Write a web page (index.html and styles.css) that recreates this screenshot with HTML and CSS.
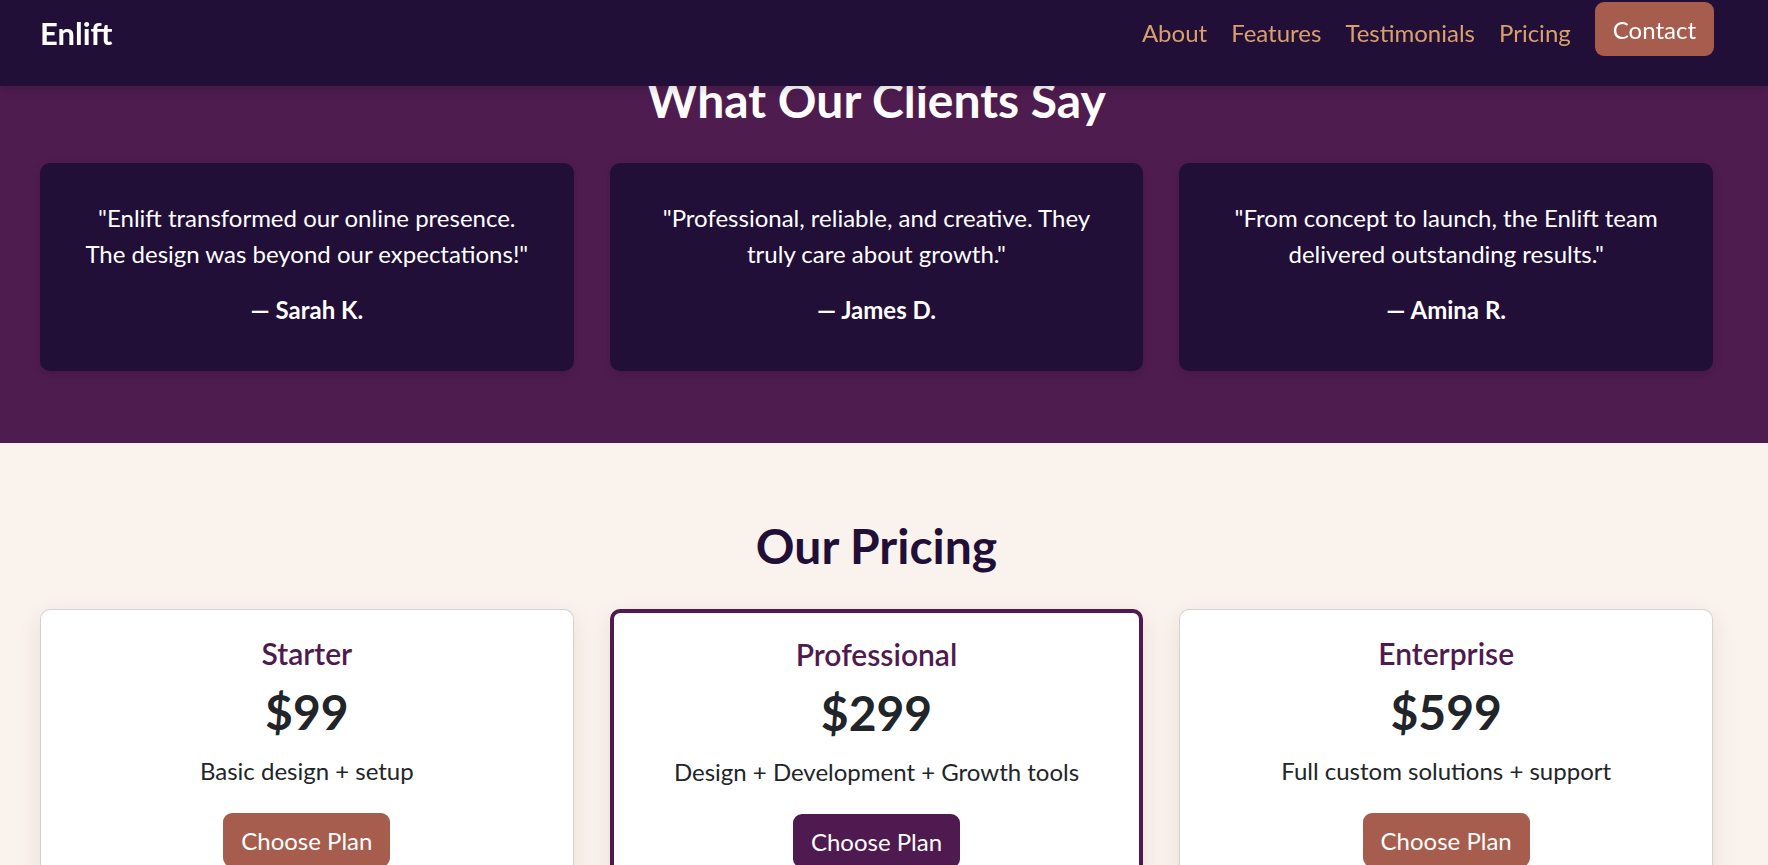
FILE: index.html
```html
<!DOCTYPE html>
<html lang="en">
<head>
<meta charset="utf-8">
<title>Enlift</title>
<link rel="stylesheet" href="styles.css">
</head>
<body>
<nav class="navbar">
  <div class="nav-inner">
    <a class="brand" href="#">Enlift</a>
    <ul class="nav-links">
      <li><a class="nav-link" href="#about">About</a></li>
      <li><a class="nav-link" href="#features">Features</a></li>
      <li><a class="nav-link" href="#testimonials">Testimonials</a></li>
      <li><a class="nav-link" href="#pricing">Pricing</a></li>
      <li><a class="btn btn-contact" href="#contact">Contact</a></li>
    </ul>
  </div>
</nav>

<section class="testimonials" id="testimonials">
  <div class="container">
    <h2 class="section-title light">What Our Clients Say</h2>
    <div class="grid">
      <div class="quote-card">
        <p>"Enlift transformed our online presence. The design was beyond our expectations!"</p>
        <h6>— Sarah K.</h6>
      </div>
      <div class="quote-card">
        <p>"Professional, reliable, and creative. They truly care about growth."</p>
        <h6>— James D.</h6>
      </div>
      <div class="quote-card">
        <p>"From concept to launch, the Enlift team delivered outstanding results."</p>
        <h6>— Amina R.</h6>
      </div>
    </div>
  </div>
</section>

<section class="pricing" id="pricing">
  <div class="container">
    <h2 class="section-title dark">Our Pricing</h2>
    <div class="grid">
      <div class="price-card">
        <h5>Starter</h5>
        <div class="price">$99</div>
        <p>Basic design + setup</p>
        <a class="btn btn-plan" href="#">Choose Plan</a>
      </div>
      <div class="price-card featured">
        <h5>Professional</h5>
        <div class="price">$299</div>
        <p>Design + Development + Growth tools</p>
        <a class="btn btn-plan btn-featured" href="#">Choose Plan</a>
      </div>
      <div class="price-card">
        <h5>Enterprise</h5>
        <div class="price">$599</div>
        <p>Full custom solutions + support</p>
        <a class="btn btn-plan" href="#">Choose Plan</a>
      </div>
    </div>
  </div>
</section>
</body>
</html>
```
FILE: styles.css
```css
* { box-sizing: border-box; }

html, body {
  margin: 0;
  padding: 0;
}

body {
  font-family: Lato, "Liberation Sans", sans-serif;
  font-size: 24px;
  line-height: 1.5;
  color: #212529;
  background: #faf2ed;
  overflow: hidden;
}

a { text-decoration: none; }

.container {
  padding: 0 55px 0 40px;
}

/* Navbar */
.navbar {
  position: fixed;
  top: 0;
  left: 0;
  right: 0;
  z-index: 10;
  height: 86px;
  background: #210f38;
  box-shadow: 0 3px 12px rgba(0, 0, 0, 0.18);
}

.nav-inner {
  height: 66px;
  padding: 0 54px 0 40px;
  display: flex;
  align-items: center;
  justify-content: space-between;
}

.brand {
  font-size: 31px;
  font-weight: 700;
  line-height: 45px;
  color: #fff;
}

.nav-links {
  list-style: none;
  margin: 0;
  padding: 0;
  display: flex;
  align-items: center;
}

.nav-link {
  display: block;
  padding: 0 12px;
  line-height: 36px;
  color: #d9a06c;
}

.btn {
  display: inline-block;
  font-size: 24px;
  line-height: 36px;
  padding: 10px 18px 8px;
  border-radius: 9px;
  color: #fff;
  background: #a65d4d;
}

.btn-contact {
  margin-left: 12px;
  margin-bottom: 8px;
}

/* Section titles */
.section-title {
  margin: 0 0 34px;
  padding-top: 2px;
  font-size: 48px;
  font-weight: 700;
  line-height: 57.6px;
  text-align: center;
}

.section-title.light { color: #fff; }
.section-title.dark { color: #210f38; }

.grid {
  display: grid;
  grid-template-columns: repeat(3, 1fr);
  gap: 36px;
}

/* Testimonials */
.testimonials {
  background: #4f1c50;
  padding: 69px 0 72px;
}

.quote-card {
  background: #210f38;
  color: #fff;
  border-radius: 10px;
  padding: 37px 36px 35px;
  text-align: center;
  box-shadow: 0 4px 10px rgba(0, 0, 0, 0.15);
}

.quote-card p {
  margin: 0 0 24px;
}

.quote-card h6 {
  margin: 0 0 12px;
  font-size: 24px;
  font-weight: 700;
  line-height: 28.8px;
}

/* Pricing */
.pricing {
  padding: 72px 0 72px;
}

.price-card {
  background: #fff;
  border: 1px solid rgba(0, 0, 0, 0.175);
  border-radius: 10px;
  padding: 25px 24px 24px;
  text-align: center;
  box-shadow: 0 8px 24px rgba(80, 40, 20, 0.09);
}

.price-card.featured {
  border: 4px solid #4f1a50;
  padding-top: 23px;
}

.price-card h5 {
  margin: 0 0 12px;
  font-size: 30px;
  font-weight: 600;
  line-height: 36px;
  color: #4f1a50;
}

.price {
  margin: 0 0 12px;
  font-size: 48px;
  font-weight: 700;
  line-height: 57.6px;
  color: #212529;
}

.price-card p {
  margin: 0 0 24px;
}

.btn-featured {
  background: #4f1a50;
}
```
